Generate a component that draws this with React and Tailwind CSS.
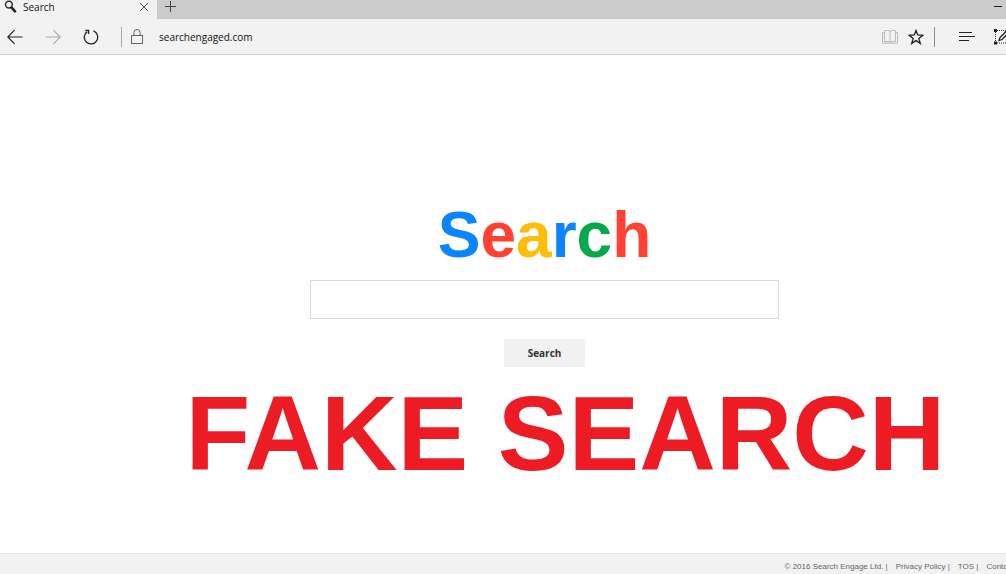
import React from 'react';

const logoLetters = [
  { char: 'S', color: 'text-[#0a84ff]' },
  { char: 'e', color: 'text-[#ff4133]' },
  { char: 'a', color: 'text-[#fdbd08]' },
  { char: 'r', color: 'text-[#0a84ff]' },
  { char: 'c', color: 'text-[#05a84a]' },
  { char: 'h', color: 'text-[#ff4133]' },
];

function TabStrip() {
  return (
    <div className="flex h-[19px] items-stretch bg-[#cbcbcb]">
      <div className="flex w-[157px] shrink-0 items-center bg-[#f2f2f2] pl-1 pr-2 pb-1.5">
        <svg width="13" height="13" viewBox="0 0 13 13" fill="none" className="shrink-0" aria-hidden="true">
          <circle cx="4.9" cy="4.6" r="3.4" stroke="#333" strokeWidth="1.5" />
          <path d="M7.6 7.6 L11 11.4" stroke="#222" strokeWidth="2.6" strokeLinecap="round" />
        </svg>
        <span className="ml-1.5 text-[10px] leading-3 text-[#111]">Search</span>
        <button type="button" aria-label="Close tab" className="ml-auto">
          <svg width="10" height="10" viewBox="0 0 10 10" stroke="#555" aria-hidden="true">
            <path d="M1 1 L9 9 M9 1 L1 9" />
          </svg>
        </button>
      </div>
      <button type="button" aria-label="New tab" className="ml-2 pb-1.5">
        <svg width="11" height="11" viewBox="0 0 11 11" stroke="#444" aria-hidden="true">
          <path d="M5.5 0 V11 M0 5.5 H11" />
        </svg>
      </button>
      <button type="button" aria-label="Minimize" className="ml-auto mr-1 pb-1.5">
        <svg width="8" height="11" viewBox="0 0 8 11" stroke="#222" aria-hidden="true">
          <path d="M0 5.5 H8" />
        </svg>
      </button>
    </div>
  );
}

function Toolbar() {
  return (
    <div className="flex h-9 items-center overflow-hidden border-b border-[#d2d2d2] bg-[#f2f2f2] pl-[7px]">
      <button type="button" aria-label="Back">
        <svg width="16" height="16" viewBox="0 0 16 16" fill="none" stroke="#222" strokeWidth="1.2" aria-hidden="true">
          <path d="M15.5 8 H1 M7.5 1.2 L0.8 8 L7.5 14.8" />
        </svg>
      </button>
      <button type="button" aria-label="Forward" className="ml-[22px]">
        <svg width="16" height="16" viewBox="0 0 16 16" fill="none" stroke="#aaa" strokeWidth="1.2" aria-hidden="true">
          <path d="M0.5 8 H15 M8.5 1.2 L15.2 8 L8.5 14.8" />
        </svg>
      </button>
      <button type="button" aria-label="Refresh" className="ml-[22px]">
        <svg width="16" height="16" viewBox="0 0 16 16" fill="none" stroke="#222" strokeWidth="1.3" aria-hidden="true">
          <path d="M10.5 1.9 A6.7 6.7 0 1 1 4.2 2.6" />
          <path d="M2.2 1.4 H5.6 V5" />
        </svg>
      </button>
      <span className="ml-[22px] h-5 w-px bg-[#a8a8a8]" />
      <svg width="12" height="15" viewBox="0 0 12 15" fill="none" stroke="#666" className="ml-[9px] shrink-0" aria-hidden="true">
        <rect x="0.5" y="6.5" width="11" height="8" />
        <path d="M2.9 6.5 V3.6 A3.1 3.1 0 0 1 9.1 3.6 V6.5" />
      </svg>
      <input
        type="text"
        aria-label="Address"
        defaultValue="searchengaged.com"
        className="ml-4 min-w-0 flex-1 bg-transparent text-[10px] leading-4 text-[#111] outline-none"
      />
      <button type="button" aria-label="Reading view">
        <svg width="16" height="15" viewBox="0 0 16 15" fill="none" stroke="#bbb" aria-hidden="true">
          <path d="M2.5 1.5 H6 Q8 1.5 8 3 Q8 1.5 10 1.5 H13.5 V12.5 H10 Q8 12.5 8 14 Q8 12.5 6 12.5 H2.5 Z M8 3 V14" />
          <path d="M2.5 3.5 H0.5 V14.2 H15.5 V3.5 H13.5" />
        </svg>
      </button>
      <button type="button" aria-label="Add to favorites" className="ml-2.5">
        <svg width="16" height="16" viewBox="0 0 16 16" fill="none" stroke="#222" strokeWidth="1.3" aria-hidden="true">
          <path d="M8 1.6 L9.7 6 L14.8 6.3 L10.8 9.4 L12.3 14.4 L8 11.6 L3.7 14.4 L5.2 9.4 L1.2 6.3 L6.3 6 Z" />
        </svg>
      </button>
      <span className="ml-2.5 h-5 w-px bg-[#8f8f8f]" />
      <button type="button" aria-label="Hub" className="ml-6">
        <svg width="16" height="11" viewBox="0 0 16 11" stroke="#222" aria-hidden="true">
          <path d="M0 1.5 H13 M0 5.5 H16 M0 9.5 H10" />
        </svg>
      </button>
      <button type="button" aria-label="Make a web note" className="-mr-1 ml-[19px] shrink-0">
        <svg width="16" height="16" viewBox="0 0 16 16" fill="none" aria-hidden="true">
          <path d="M1.5 3 V14 M3 1.5 H13 M3 14 H14" stroke="#333" strokeDasharray="1 1" />
          <path d="M0 0 H3 V3 H0 Z M0 12.5 H3 V15.5 H0 Z" fill="#222" />
          <path d="M5 11.5 L6 8.5 L13 1.5 L15 3.5 L8 10.5 Z" stroke="#222" strokeWidth="1.3" />
        </svg>
      </button>
    </div>
  );
}

function Footer() {
  return (
    <footer className="flex h-[21px] items-center justify-end overflow-hidden border-t border-[#e0e0e0] bg-[#f2f2f2] pt-1.5 text-[8px] leading-3 whitespace-nowrap text-[#666]">
      <div className="-mr-5 flex gap-2">
        <span>&copy; 2016 Search Engage Ltd. |</span>
        <span><a href="#privacy">Privacy Policy</a> |</span>
        <span><a href="#tos">TOS</a> |</span>
        <a href="#contact">Contact Us</a>
      </div>
    </footer>
  );
}

export default function App() {
  return (
    <div className="flex min-h-screen flex-col overflow-hidden bg-white font-['Liberation_Sans',Arial,sans-serif]">
      <header className="font-['Open_Sans','Segoe_UI',sans-serif]">
        <TabStrip />
        <Toolbar />
      </header>
      <main className="flex flex-1 flex-col items-center pt-[143px] pl-[83px]">
        <h1 className="text-[64px] leading-[74px] font-bold">
          {logoLetters.map((l, i) => (
            <span key={i} className={l.color}>{l.char}</span>
          ))}
        </h1>
        <form className="mt-2 flex w-full flex-col items-center" onSubmit={(e) => e.preventDefault()}>
          <input
            type="text"
            aria-label="Search query"
            className="h-[39px] w-full max-w-[469px] border border-[#d9d9d9] bg-white px-3 text-base outline-none"
          />
          <button type="submit" className="mt-5 bg-[#f1f1f1] px-6 py-1.5 font-['Open_Sans',sans-serif] text-[10px] leading-4 font-bold text-[#333]">
            Search
          </button>
        </form>
        <p className="mt-1.5 ml-[42px] text-[106px] leading-[120px] font-bold whitespace-nowrap text-[#ed1c24]">FAKE SEARCH</p>
      </main>
      <Footer />
    </div>
  );
}
